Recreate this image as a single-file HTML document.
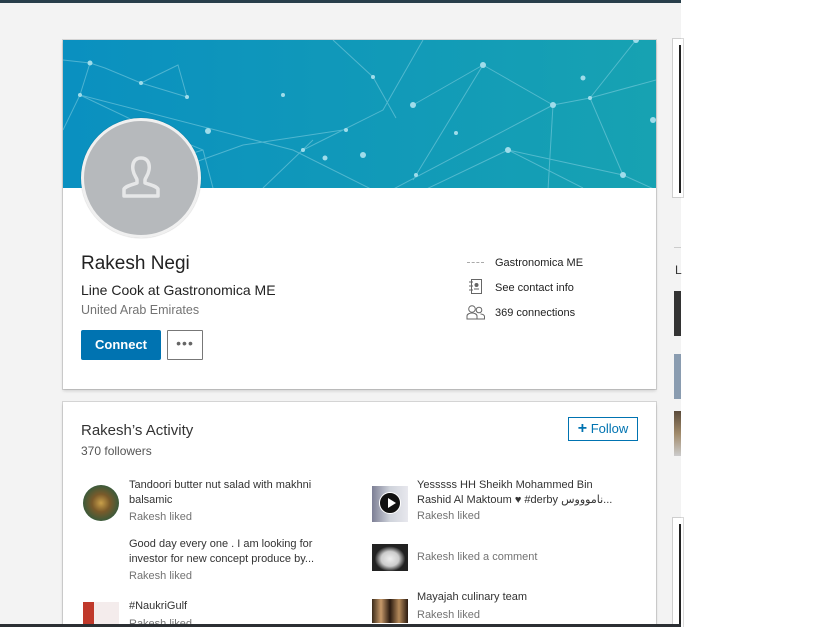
<!DOCTYPE html>
<html style="width:819px;height:627px;overflow:hidden"><head><meta charset="utf-8"><style>
*{margin:0;padding:0;box-sizing:border-box}
html,body{width:819px;height:627px;overflow:hidden}
body{background:#fff;font-family:"Liberation Sans","DejaVu Sans",sans-serif;position:relative}
.page{position:absolute;left:0;top:0;width:681px;height:627px;background:#f3f3f3}
.topbar{position:absolute;left:0;top:0;width:681px;height:3px;background:#283e4a}
.botbar{position:absolute;left:0;top:624px;width:681px;height:3px;background:#2b2f33}
.card{position:absolute;background:#fff;box-shadow:0 0 0 1px rgba(0,0,0,.12),0 2px 3px rgba(0,0,0,.15)}
.t{position:absolute;white-space:nowrap}
.dark{color:#222}
.grey{color:#737373}
.thumb{position:absolute;width:36px;height:36px}
</style></head><body>
<div class="page"></div>
<div class="topbar"></div>

<div class="card" style="left:63px;top:40px;width:593px;height:349px">
  <svg width="593" height="148" style="position:absolute;left:0;top:0">
    <defs><linearGradient id="g" x1="0" x2="1"><stop offset="0" stop-color="#0a90c0"/><stop offset="1" stop-color="#17a2b2"/></linearGradient></defs>
    <rect width="593" height="148" fill="url(#g)"/>
    <g stroke="#8fd6e6" stroke-opacity=".5" stroke-width="1" fill="none">
      <path d="M0 20 L27 23 L42 28 L78 43 L124 57 M27 23 L17 55 L0 90 M17 55 L230 110 L330 160 M78 43 L115 25 L124 57 M17 55 L80 85 L140 110 L150 148 M140 110 L40 140 M180 105 L60 148 M250 100 L200 148 M420 25 L350 65 M420 25 L490 65 M420 25 L350 140 M490 65 L527 58 L593 40 M490 65 L485 150 M490 65 L300 165 M527 58 L573 0 M527 58 L560 135 M445 110 L330 165 M445 110 L560 135 M445 110 L520 148 M270 0 L310 37 L333 78 M360 0 L320 70 L240 110 M560 135 L593 150 M180 105 L280 90"/>
    </g>
    <g fill="#9fdcea">
      <circle cx="27" cy="23" r="2.5"/><circle cx="17" cy="55" r="2"/><circle cx="124" cy="57" r="2"/><circle cx="78" cy="43" r="2"/><circle cx="145" cy="91" r="3"/><circle cx="240" cy="110" r="2"/><circle cx="420" cy="25" r="3"/><circle cx="490" cy="65" r="3"/><circle cx="527" cy="58" r="2"/><circle cx="350" cy="65" r="3"/><circle cx="445" cy="110" r="3"/><circle cx="520" cy="38" r="2.5"/><circle cx="573" cy="0" r="3"/><circle cx="560" cy="135" r="3"/><circle cx="590" cy="80" r="3"/><circle cx="310" cy="37" r="2"/><circle cx="353" cy="135" r="2"/><circle cx="262" cy="118" r="2.5"/><circle cx="300" cy="115" r="3"/><circle cx="393" cy="93" r="2"/><circle cx="220" cy="55" r="2"/><circle cx="283" cy="90" r="2"/>
    </g>
  </svg>
  <div style="position:absolute;left:18px;top:78px;width:120px;height:120px;border-radius:50%;background:#b6b9bc;border:3px solid #f0f0f0;box-shadow:0 0 1px rgba(0,0,0,.3)"></div>
  <svg width="40" height="46" style="position:absolute;left:58px;top:115px" viewBox="0 0 40 46" fill="none" stroke="#e6e7e8" stroke-width="3.5" stroke-linejoin="round">
    <path d="M20 3 C13 3 11 9 12 15 C13 21 16 23 16 25 L16 28 C10 30 5 31 3 34 L3 41 L37 41 L37 34 C35 31 30 30 24 28 L24 25 C24 23 27 21 28 15 C29 9 27 3 20 3Z"/>
  </svg>
  <div class="t dark" style="left:18px;top:213px;font-size:19px">Rakesh Negi</div>
  <div class="t dark" style="left:18px;top:242px;font-size:14px">Line Cook at Gastronomica ME</div>
  <div class="t grey" style="left:18px;top:263px;font-size:12.5px">United Arab Emirates</div>
  <div style="position:absolute;left:18px;top:290px;width:80px;height:30px;background:#0073b1;border-radius:2px;color:#fff;font-weight:bold;font-size:13px;text-align:center;line-height:30px">Connect</div>
  <div style="position:absolute;left:104px;top:290px;width:36px;height:30px;border:1px solid #777;border-radius:1px;text-align:center;line-height:24px;font-size:14px;color:#666;letter-spacing:1px">•••</div>
  <div style="position:absolute;left:404px;top:222px;width:17px;height:1px;border-top:1px dashed #aaa"></div>
  <div class="t dark" style="left:432px;top:217px;font-size:11px">Gastronomica ME</div>
  <svg width="18" height="18" style="position:absolute;left:404px;top:238px" fill="none" stroke="#666" stroke-width="1"><rect x="4.5" y="1.5" width="10" height="14"/><path d="M2 4h4M2 8h4M2 12h4"/><circle cx="9.5" cy="7" r="1.5" fill="#666"/><path d="M7 11h5"/></svg>
  <div class="t dark" style="left:432px;top:242px;font-size:11px">See contact info</div>
  <svg width="20" height="16" style="position:absolute;left:403px;top:264px" fill="none" stroke="#666" stroke-width="1"><circle cx="6" cy="5" r="3.3"/><path d="M1 15v-3c0-2 3-3 5-3s5 1 5 3v3z"/><circle cx="13" cy="6" r="2.8"/><path d="M11.5 15h7v-2.5c0-1.5-2-2.5-4-2.5"/></svg>
  <div class="t dark" style="left:432px;top:267px;font-size:11px">369 connections</div>
</div>

<div class="card" style="left:63px;top:402px;width:593px;height:225px;overflow:hidden">
  <div class="t dark" style="left:18px;top:20px;font-size:15px;color:#333">Rakesh’s Activity</div>
  <div class="t grey" style="left:18px;top:42px;font-size:12px;color:#555">370 followers</div>
  <div style="position:absolute;left:505px;top:15px;width:70px;height:24px;border:1px solid #0073b1;color:#0073b1;font-size:13px;text-align:center;line-height:22px"><b style="font-size:16px">+</b> Follow</div>

  <div class="thumb" style="left:20px;top:83px;border-radius:50%;background:radial-gradient(circle,#c9a04a 0%,#7a5a2a 35%,#3c5a3a 70%,#2e3e2e 100%)"></div>
  <div class="t dark" style="left:66px;top:76px;font-size:11px;line-height:15px;color:#333">Tandoori butter nut salad with makhni<br>balsamic</div>
  <div class="t grey" style="left:66px;top:109px;font-size:11px">Rakesh liked</div>
  <div class="t" style="left:66px;top:135px;font-size:11px;line-height:15px;color:#333">Good day every one . I am looking for<br>investor for new concept produce by...</div>
  <div class="t grey" style="left:66px;top:168px;font-size:11px">Rakesh liked</div>
  <div class="thumb" style="left:20px;top:200px;background:linear-gradient(90deg,#c0392b 0 30%,#f4ecec 30%)"></div>
  <div class="t" style="left:66px;top:198px;font-size:11px;color:#333">#NaukriGulf</div>
  <div class="t grey" style="left:66px;top:216px;font-size:11px">Rakesh liked</div>

  <div class="thumb" style="left:309px;top:84px;background:linear-gradient(90deg,#7d7f95,#cfd3db,#e8e8ee)"></div>
  <div style="position:absolute;left:316px;top:90px;width:22px;height:22px;border-radius:50%;background:#111;border:1px solid #fff"></div>
  <div style="position:absolute;left:325px;top:96px;width:0;height:0;border-left:8px solid #fff;border-top:5px solid transparent;border-bottom:5px solid transparent"></div>
  <div class="t" style="left:354px;top:76px;font-size:11px;line-height:15px;color:#333">Yesssss HH Sheikh Mohammed Bin<br>Rashid Al Maktoum ♥ #derby ناموووس...</div>
  <div class="t grey" style="left:354px;top:108px;font-size:11px">Rakesh liked</div>
  <div class="thumb" style="left:309px;top:142px;height:27px;background:radial-gradient(ellipse at 50% 55%,#eee 0%,#ccc 35%,#222 60%)"></div>
  <div class="t grey" style="left:354px;top:149px;font-size:11px">Rakesh liked a comment</div>
  <div class="thumb" style="left:309px;top:197px;height:24px;background:linear-gradient(90deg,#3a2a1a,#c79a6a,#2a1a10,#b58a5a,#2a1a10)"></div>
  <div class="t" style="left:354px;top:189px;font-size:11px;color:#333">Mayajah culinary team</div>
  <div class="t grey" style="left:354px;top:207px;font-size:11px">Rakesh liked</div>
</div>

<div style="position:absolute;left:673px;top:39px;width:10px;height:158px;background:#fff;box-shadow:0 0 0 1px rgba(0,0,0,.15)"></div>
<div style="position:absolute;left:679px;top:45px;width:2px;height:148px;background:#222"></div>
<div style="position:absolute;left:674px;top:247px;width:7px;height:1px;background:#ccc"></div>
<div class="t" style="left:675px;top:263px;font-size:12px;color:#333">L</div>
<div style="position:absolute;left:674px;top:291px;width:7px;height:45px;background:#333"></div>
<div style="position:absolute;left:674px;top:354px;width:7px;height:45px;background:#8a9cb0"></div>
<div style="position:absolute;left:674px;top:411px;width:7px;height:45px;background:linear-gradient(#5a4a3a,#a08a6a,#ccc)"></div>
<div style="position:absolute;left:673px;top:518px;width:10px;height:109px;background:#fff;box-shadow:0 0 0 1px rgba(0,0,0,.15)"></div>
<div style="position:absolute;left:679px;top:524px;width:2px;height:103px;background:#222"></div>
<div class="botbar"></div>
</body></html>
